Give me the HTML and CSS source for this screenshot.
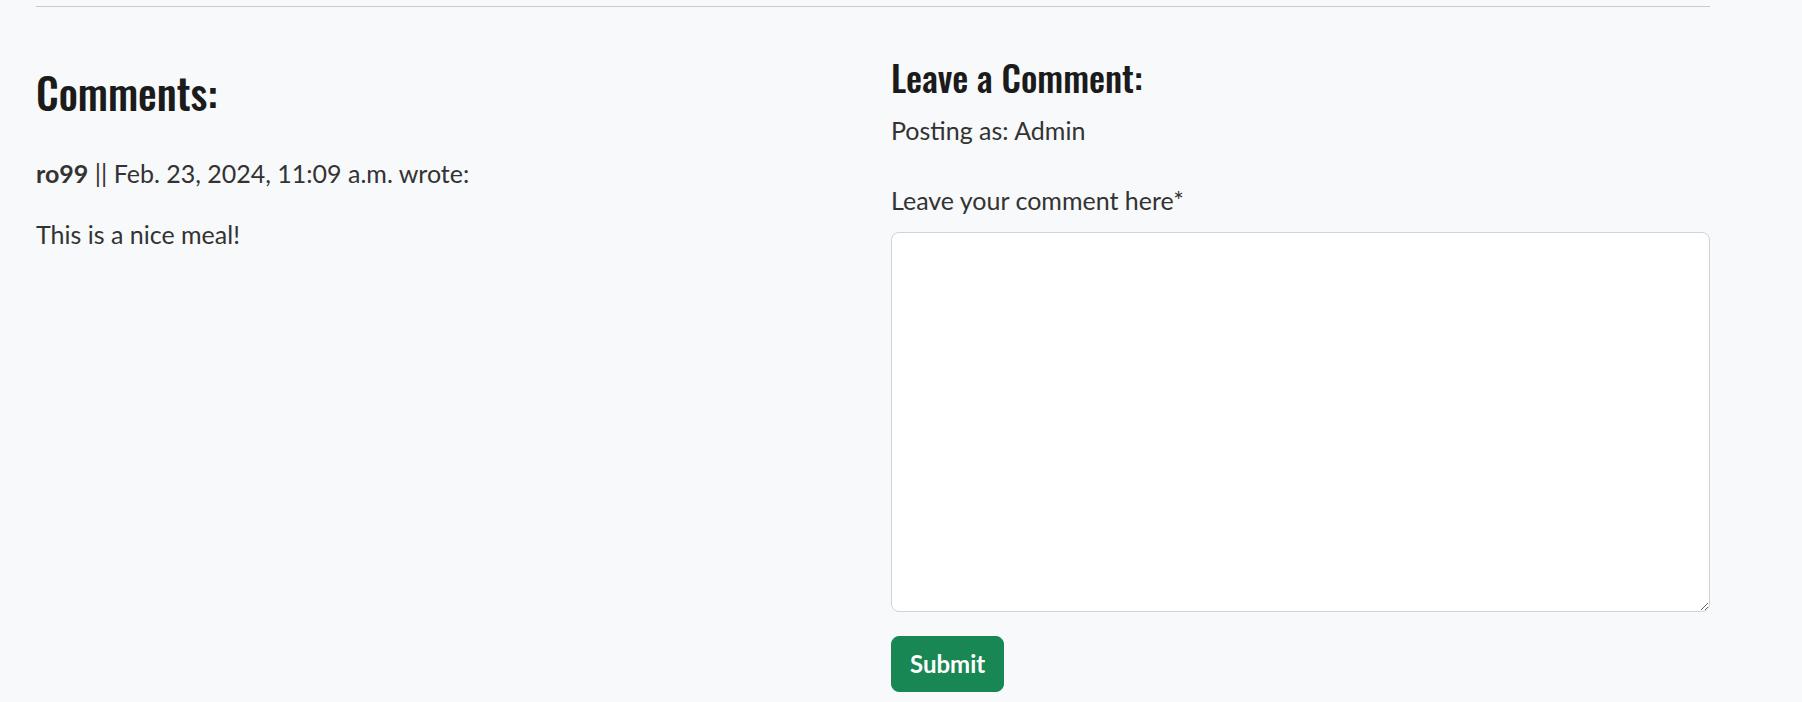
FILE: index.html
```html
<!DOCTYPE html>
<html lang="en">
<head>
<meta charset="utf-8">
<title>Comments</title>
<link rel="stylesheet" href="styles.css">
</head>
<body>
<div class="container">
  <hr class="divider">
  <div class="row">
    <section class="col col-comments">
      <h3 class="heading heading-lg">Comments:</h3>
      <div class="comment">
        <p class="comment-meta"><strong class="author">ro99</strong> || Feb. 23, 2024, 11:09 a.m. wrote:</p>
        <p class="comment-body">This is a nice meal!</p>
      </div>
    </section>
    <section class="col col-form">
      <h4 class="heading heading-md">Leave a Comment:</h4>
      <p class="posting-as">Posting as: Admin</p>
      <form class="comment-form">
        <label class="form-label" for="id_body">Leave your comment here*</label>
        <textarea class="form-control" id="id_body" name="body"></textarea>
        <button type="submit" class="btn-submit">Submit</button>
      </form>
    </section>
  </div>
</div>
</body>
</html>
```
FILE: styles.css
```css
html, body {
  margin: 0;
  padding: 0;
}
body {
  background: #f8f9fa;
  color: #333333;
  font-family: Lato, "Open Sans", "Liberation Sans", sans-serif;
  font-size: 25px;
  line-height: 1.5;
  overflow: hidden;
}
.container {
  width: 1674px;
  margin-left: 36px;
}
.divider {
  margin: 6px 0 0 0;
  border: 0;
  border-top: 1px solid #c9cbcd;
  height: 0;
}
.row {
  display: grid;
  grid-template-columns: 819px 819px;
  column-gap: 36px;
  margin-top: 48px;
}
.col {
  display: flex;
  flex-direction: column;
  align-items: flex-start;
}
.col-comments {
  padding-top: 12px;
}
.heading {
  margin: 0;
  font-family: Oswald, "Roboto Condensed", "Liberation Sans Narrow", "DejaVu Sans Condensed", sans-serif;
  font-weight: 500;
  line-height: 1.2;
  color: #1b1b1b;
}
.heading-lg {
  font-size: 42px;
  margin-bottom: 38px;
}
.heading-md {
  font-size: 36px;
  margin-bottom: 14px;
}
p {
  margin: 0;
}
.comment-meta {
  margin-bottom: 23.5px;
}
.author {
  font-weight: 700;
}
.posting-as {
  margin-bottom: 32.5px;
}
.comment-form {
  display: flex;
  flex-direction: column;
  align-items: flex-start;
}
.form-label {
  margin-bottom: 12px;
}
.form-control {
  box-sizing: border-box;
  width: 819px;
  height: 380px;
  margin: 0;
  padding: 9px 18px;
  background: #ffffff;
  border: 1px solid #ced4da;
  border-radius: 8px;
  font-family: Lato, sans-serif;
  font-size: 24px;
  color: #333;
  resize: vertical;
}
.btn-submit {
  margin-top: 24px;
  padding: 9px 18px;
  background: #198754;
  border: 1px solid #198754;
  border-radius: 8px;
  color: #ffffff;
  font-family: Lato, sans-serif;
  font-weight: 700;
  font-size: 24px;
  line-height: 36px;
  cursor: pointer;
}
```
